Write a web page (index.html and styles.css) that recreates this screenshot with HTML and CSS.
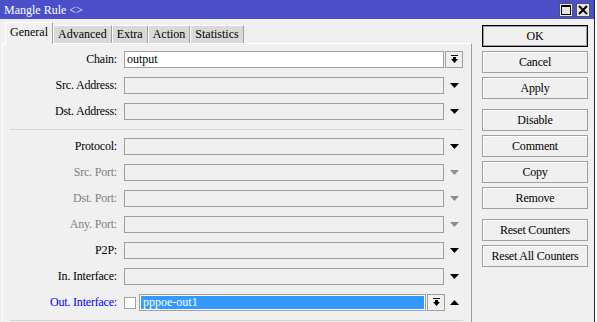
FILE: index.html
```html
<!DOCTYPE html>
<html lang="en">
<head>
    <meta charset="UTF-8">
    <meta name="viewport" content="width=device-width, initial-scale=1.0">
    <title>Mangle Rule</title>
    <link rel="stylesheet" href="styles.css">
</head>
<body>
    <div class="window">
        <div class="titlebar">
            <span class="title">Mangle Rule &lt;&gt;</span>
            <div class="title-buttons">
                <span class="title-btn">
                    <svg width="12" height="12" viewBox="0 0 12 12"><rect x="1.5" y="1.5" width="9" height="9" fill="none" stroke="#000" stroke-width="1"/><rect x="1" y="1" width="10" height="2" fill="#000"/></svg>
                </span>
                <span class="title-btn">
                    <svg width="12" height="12" viewBox="0 0 12 12"><path d="M2 2 L10 10 M10 2 L2 10" stroke="#000" stroke-width="2"/></svg>
                </span>
            </div>
        </div>

        <div class="main">
            <div class="left">
                <div class="tabs">
                    <span class="tab active">General</span>
                    <span class="tab">Advanced</span>
                    <span class="tab">Extra</span>
                    <span class="tab">Action</span>
                    <span class="tab">Statistics</span>
                </div>

                <div class="panel">
                    <div class="row">
                        <label>Chain:</label>
                        <div class="field white">output</div>
                        <span class="drop-box">
                            <svg width="9" height="9" viewBox="0 0 9 9"><rect x="1" y="0" width="7" height="1"/><rect x="3" y="2" width="3" height="2"/><path d="M1 4 H8 L4.5 8 Z"/></svg>
                        </span>
                    </div>
                    <div class="row">
                        <label>Src. Address:</label>
                        <div class="field"></div>
                        <svg class="arrow" width="9" height="5" viewBox="0 0 9 5"><path d="M0 0 H9 L4.5 5 Z"/></svg>
                    </div>
                    <div class="row">
                        <label>Dst. Address:</label>
                        <div class="field"></div>
                        <svg class="arrow" width="9" height="5" viewBox="0 0 9 5"><path d="M0 0 H9 L4.5 5 Z"/></svg>
                    </div>

                    <div class="separator"></div>

                    <div class="row">
                        <label>Protocol:</label>
                        <div class="field"></div>
                        <svg class="arrow" width="9" height="5" viewBox="0 0 9 5"><path d="M0 0 H9 L4.5 5 Z"/></svg>
                    </div>
                    <div class="row disabled">
                        <label>Src. Port:</label>
                        <div class="field"></div>
                        <svg class="arrow" width="9" height="5" viewBox="0 0 9 5"><path d="M0 0 H9 L4.5 5 Z"/></svg>
                    </div>
                    <div class="row disabled">
                        <label>Dst. Port:</label>
                        <div class="field"></div>
                        <svg class="arrow" width="9" height="5" viewBox="0 0 9 5"><path d="M0 0 H9 L4.5 5 Z"/></svg>
                    </div>
                    <div class="row disabled">
                        <label>Any. Port:</label>
                        <div class="field"></div>
                        <svg class="arrow" width="9" height="5" viewBox="0 0 9 5"><path d="M0 0 H9 L4.5 5 Z"/></svg>
                    </div>
                    <div class="row">
                        <label>P2P:</label>
                        <div class="field"></div>
                        <svg class="arrow" width="9" height="5" viewBox="0 0 9 5"><path d="M0 0 H9 L4.5 5 Z"/></svg>
                    </div>
                    <div class="row">
                        <label>In. Interface:</label>
                        <div class="field"></div>
                        <svg class="arrow" width="9" height="5" viewBox="0 0 9 5"><path d="M0 0 H9 L4.5 5 Z"/></svg>
                    </div>
                    <div class="row">
                        <label class="blue">Out. Interface:</label>
                        <span class="checkbox"></span>
                        <div class="field selected">pppoe-out1</div>
                        <span class="drop-box">
                            <svg width="9" height="9" viewBox="0 0 9 9"><rect x="1" y="0" width="7" height="1"/><rect x="3" y="2" width="3" height="2"/><path d="M1 4 H8 L4.5 8 Z"/></svg>
                        </span>
                        <svg class="arrow up" width="9" height="5" viewBox="0 0 9 5"><path d="M0 5 H9 L4.5 0 Z"/></svg>
                    </div>

                    <div class="separator"></div>
                </div>
            </div>

            <div class="actions">
                <button class="btn default">OK</button>
                <button class="btn">Cancel</button>
                <button class="btn">Apply</button>
                <button class="btn group">Disable</button>
                <button class="btn">Comment</button>
                <button class="btn">Copy</button>
                <button class="btn">Remove</button>
                <button class="btn group">Reset Counters</button>
                <button class="btn">Reset All Counters</button>
            </div>
        </div>
    </div>
</body>
</html>
```

FILE: styles.css
```css
body {
    margin: 0;
    background-color: #ffffff;
    font-family: 'Liberation Serif', serif;
    font-size: 12px;
    color: #000;
    overflow: hidden;
}

.window {
    width: 594px;
    height: 322px;
    background-color: #f0f0f0;
    border-right: 1px solid #2a2a2a;
    overflow: hidden;
}

/* Title bar */
.titlebar {
    height: 19px;
    background-color: #4b4fc9;
    display: flex;
    align-items: center;
    justify-content: space-between;
    padding: 0 4px;
}

.title {
    color: #ffffff;
    font-size: 12px;
    padding-top: 1px;
}

.title-buttons {
    display: flex;
    gap: 3px;
}

.title-btn {
    width: 14px;
    height: 14px;
    box-sizing: border-box;
    background-color: #e6e6e6;
    border: 1px solid #555;
    display: flex;
    align-items: center;
    justify-content: center;
}

/* Main area */
.main {
    display: flex;
    padding-left: 2px;
    gap: 10px;
}

.left {
    width: 470px;
}

.tabs {
    display: flex;
    align-items: flex-end;
    height: 21px;
    margin-top: 3px;
    padding-left: 3px;
}

.tab {
    height: 18px;
    box-sizing: border-box;
    padding: 0 4px;
    line-height: 16px;
    background-color: #d9d9d9;
    border-left: 1px solid #ffffff;
    border-top: 1px solid #ffffff;
    border-right: 1px solid #a0a0a0;
}

.tab.active {
    height: 22px;
    line-height: 18px;
    background-color: #f0f0f0;
    margin-bottom: -1px;
    position: relative;
}

.panel {
    height: 280px;
    border-top: 1px solid #ffffff;
    border-left: 1px solid #ffffff;
    border-right: 1px solid #a0a0a0;
    padding-top: 7px;
    display: flex;
    flex-direction: column;
    gap: 9px;
}

.row {
    display: flex;
    align-items: center;
    height: 17px;
}

.row label {
    width: 114px;
    margin-right: 7px;
    text-align: right;
    letter-spacing: -0.2px;
}

.row label.blue {
    color: #0000ff;
}

.field {
    width: 320px;
    height: 17px;
    box-sizing: border-box;
    border: 1px solid #a0a0a0;
    background-color: #f0f0f0;
    padding-left: 2px;
    line-height: 15px;
}

.field.white {
    background-color: #ffffff;
}

.field.selected {
    width: 287px;
    background-color: #3399ff;
    color: #ffffff;
    box-shadow: inset 0 0 0 1px #ffffff;
    padding-left: 3px;
}

.checkbox {
    width: 12px;
    height: 12px;
    box-sizing: border-box;
    border: 1px solid #a0a0a0;
    background-color: #ffffff;
    margin-right: 3px;
}

.drop-box {
    width: 18px;
    height: 17px;
    box-sizing: border-box;
    margin-left: 1px;
    border: 1px solid #a0a0a0;
    background-color: #f0f0f0;
    display: flex;
    align-items: center;
    justify-content: center;
}

.arrow {
    margin-left: 6px;
    fill: #000;
}

.drop-box + .arrow {
    margin-left: 5px;
}

.row.disabled label {
    color: #808080;
}

.row.disabled .arrow {
    fill: #8a9088;
}

.separator {
    height: 1px;
    background-color: #d4d4d4;
    margin: 0 8px -1px 7px;
}

/* Buttons on the right */
.actions {
    width: 106px;
    margin-top: 6px;
    display: flex;
    flex-direction: column;
}

.btn {
    height: 22px;
    box-sizing: border-box;
    margin-bottom: 4px;
    border: 1px solid #a0a0a0;
    box-shadow: inset 1px 1px 0 #ffffff;
    background-color: #f0f0f0;
    font-family: 'Liberation Serif', serif;
    font-size: 12px;
    letter-spacing: -0.2px;
    color: #000;
    padding: 0;
}

.btn.default {
    border: 1px solid #000;
    box-shadow: inset 0 0 0 1px #a0a0a0;
}

.btn.group {
    margin-top: 6px;
}
```
